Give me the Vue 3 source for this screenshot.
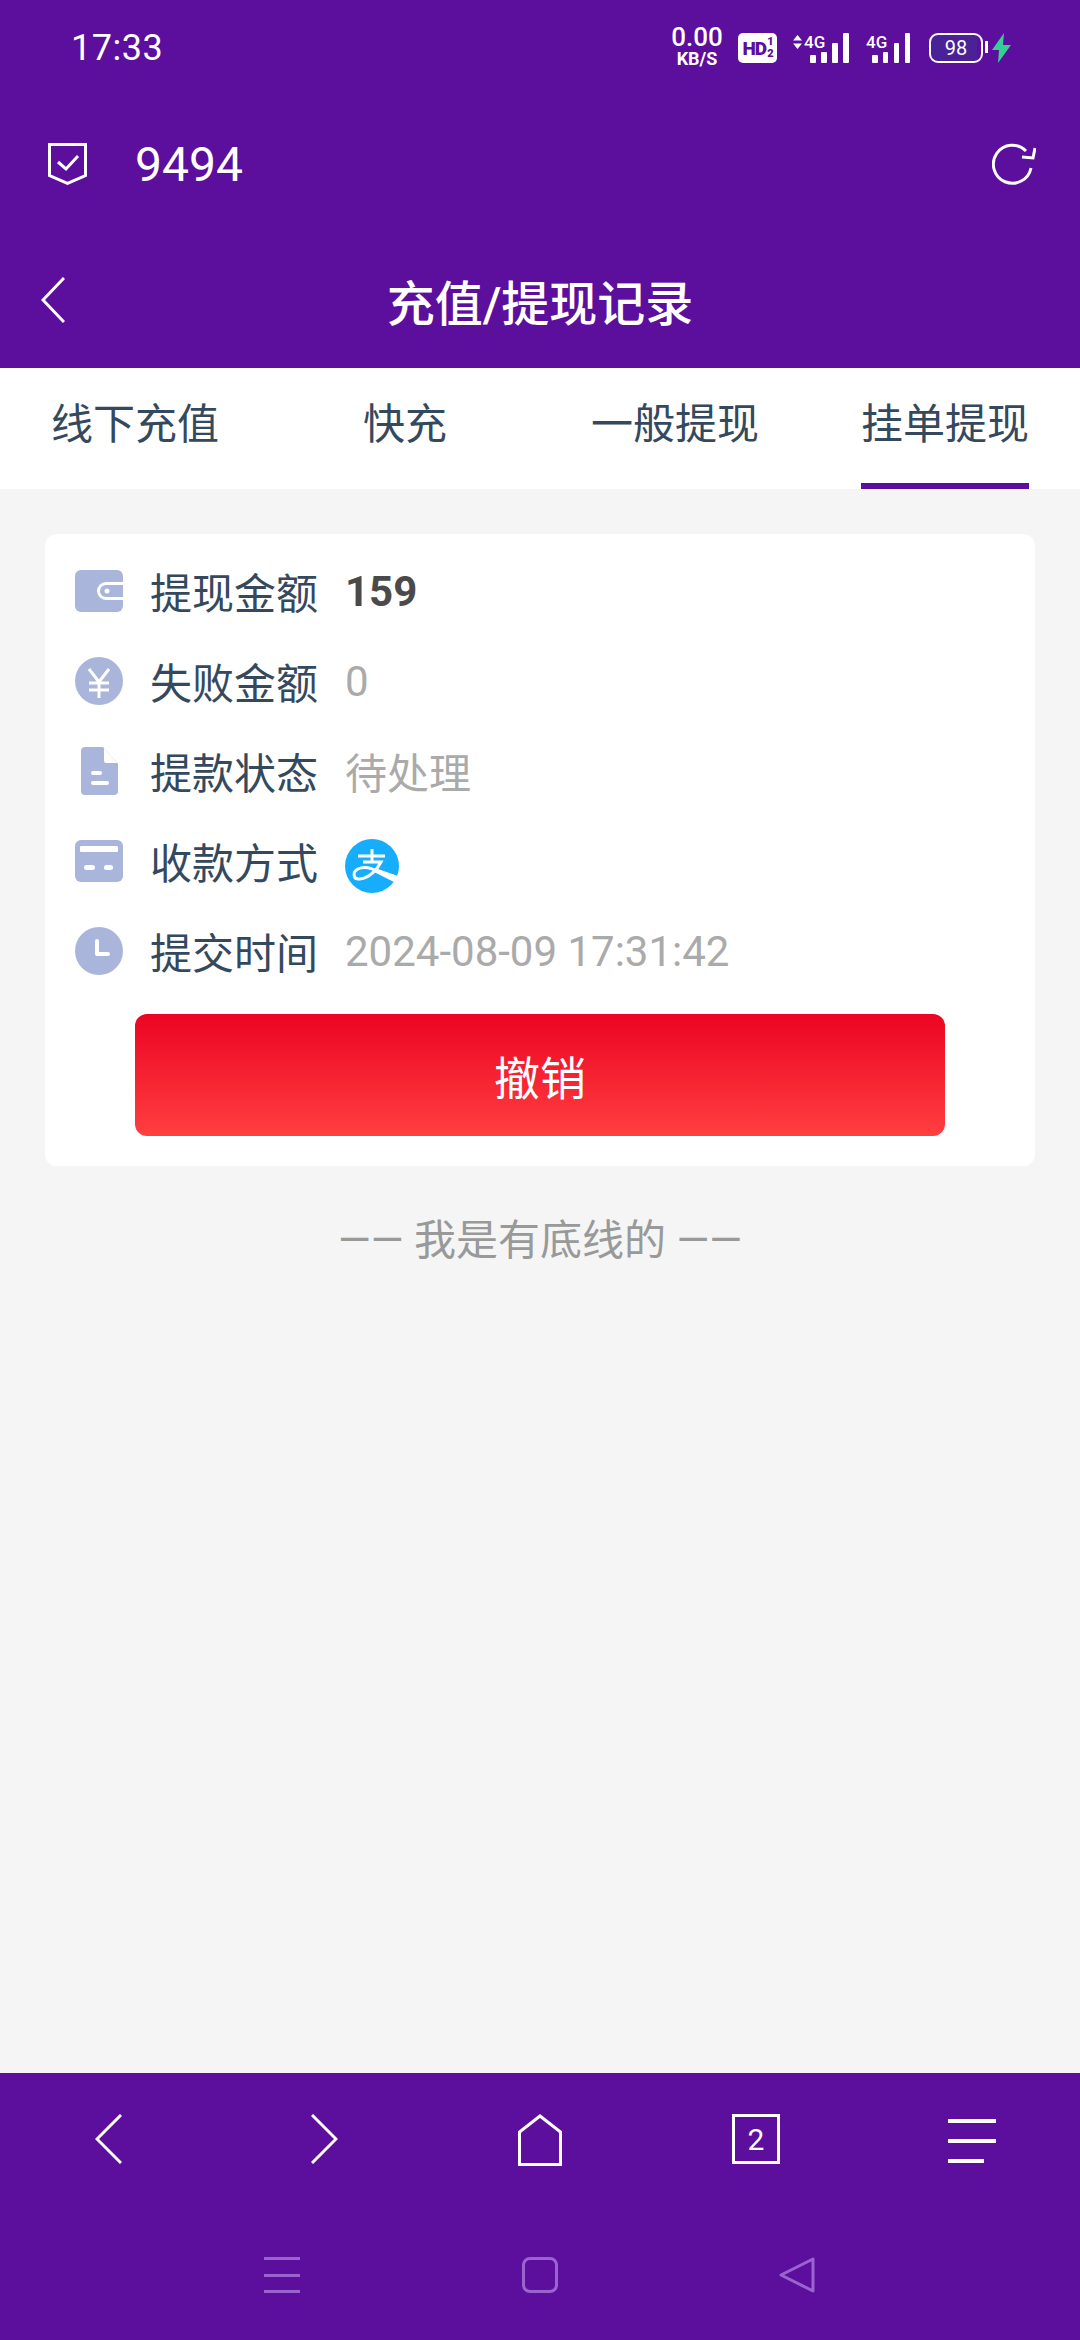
<template>
  <div class="page">
    <header class="head">
      <div class="status">
        <span class="clock">17:33</span>
        <div class="status-icons">
          <div class="speed"><b>0.00</b><i>KB/S</i></div>
          <div class="hd">HD<span class="frac">1<br>2</span></div>
          <div class="net net-first">
            <svg width="9" height="14" viewBox="0 0 9 14"><path d="M4.500 0L9 5.500H0zM4.500 14L0 8.500h9z" fill="#fff"/></svg>
            <span class="net-label">4G</span>
            <svg class="bars" width="39" height="30" viewBox="0 0 39 30"><g fill="#fff"><rect x="0" y="22" width="6" height="8" rx="1"/><rect x="11" y="19" width="6" height="11" rx="1"/><rect x="22" y="10" width="6" height="20" rx="1"/><rect x="33" y="0" width="6" height="30" rx="1"/></g></svg>
          </div>
          <div class="net">
            <span class="net-label">4G</span>
            <svg class="bars short-bars" width="38" height="30" viewBox="0 0 38 30"><g fill="#fff"><rect x="0" y="22" width="6" height="8" rx="1"/><rect x="11" y="19" width="5" height="11" rx="1"/><rect x="22" y="10" width="5" height="20" rx="1"/><rect x="33" y="0" width="5" height="30" rx="1"/></g></svg>
          </div>
          <div class="battery"><span>98</span></div>
          <svg class="bolt" width="19" height="30" viewBox="0 0 19 30"><path d="M12 0L0 17h7l-1 13L19 12h-8z" fill="#35cf93"/></svg>
        </div>
      </div>

      <div class="site-row">
        <svg width="39" height="42" viewBox="0 0 39 42" fill="none" stroke="#fff" stroke-width="3">
          <path d="M1.500 1.500h36v31L19.500 40.400 1.500 32.500z"/>
          <path d="M10 19l8 7 12-13"/>
        </svg>
        <span class="site-name">9494</span>
        <svg class="refresh" width="44" height="42" viewBox="0 0 44 42" fill="none" stroke="#fff" stroke-width="3">
          <path d="M34 8A19 19 0 1 0 39 25"/>
          <path d="M30 14l11 1 2-10"/>
        </svg>
      </div>

      <div class="title-row">
        <svg class="back" width="24" height="46" viewBox="0 0 24 46" fill="none" stroke="#fff" stroke-width="3"><path d="M23 1L2 23l21 22"/></svg>
        <h1>充值/提现记录</h1>
      </div>
    </header>

    <nav class="tabs">
      <div v-for="(tab, i) in tabs" :key="tab" class="tab" :class="{ active: i === 3 }">
        <span>{{ tab }}</span>
      </div>
    </nav>

    <main class="content">
      <section class="card">
        <div class="row">
          <svg class="ico" width="48" height="42" viewBox="0 0 48 42">
            <rect width="48" height="42" rx="6" fill="#a9b5da"/>
            <path d="M48 12H31a9 9 0 0 0 0 18h17z" fill="#fff"/>
            <path d="M48 15H31a6 6 0 0 0 0 12h17z" fill="#a9b5da"/>
            <circle cx="32" cy="21" r="2.500" fill="#fff"/>
          </svg>
          <span class="label">提现金额</span>
          <span class="value strong">159</span>
        </div>
        <div class="row">
          <svg class="ico" width="48" height="48" viewBox="0 0 48 48">
            <circle cx="24" cy="24" r="24" fill="#a9b5da"/>
            <path d="M14 12l10 13 10-13M14 26h20M14 33h20M24 25v16" fill="none" stroke="#fff" stroke-width="3"/>
          </svg>
          <span class="label">失败金额</span>
          <span class="value">0</span>
        </div>
        <div class="row">
          <svg class="ico" width="48" height="48" viewBox="0 0 48 48">
            <path d="M10 0h18l15 17v27a4 4 0 0 1-4 4H10a4 4 0 0 1-4-4V4a4 4 0 0 1 4-4z" fill="#a9b5da"/>
            <path d="M29 1l13 15H31a2 2 0 0 1-2-2z" fill="#fff"/>
            <rect x="16" y="24" width="11" height="4" rx="2" fill="#fff"/>
            <rect x="16" y="34" width="18" height="4" rx="2" fill="#fff"/>
          </svg>
          <span class="label">提款状态</span>
          <span class="value cjk">待处理</span>
        </div>
        <div class="row">
          <svg class="ico" width="48" height="42" viewBox="0 0 48 42">
            <rect width="48" height="42" rx="6" fill="#a9b5da"/>
            <rect x="5" y="6" width="38" height="6" rx="1" fill="#fff"/>
            <rect x="9" y="25" width="11" height="5" rx="2.500" fill="#fff"/>
            <rect x="29" y="25" width="9" height="5" rx="2.500" fill="#fff"/>
          </svg>
          <span class="label">收款方式</span>
          <svg class="alipay" width="54" height="54" viewBox="0 0 54 54">
            <circle cx="27" cy="27" r="27" fill="#16aefc"/>
            <path d="M13 17h27M27 10v12M18 23h18C32 31 24 39 15 40 8 41 7 33 13 30c6-3 14-1 23 4" fill="none" stroke="#fff" stroke-width="3"/>
            <path d="M30 29l23 8-2 7-22-11z" fill="#fff"/>
          </svg>
        </div>
        <div class="row">
          <svg class="ico" width="48" height="48" viewBox="0 0 48 48">
            <circle cx="24" cy="24" r="24" fill="#a9b5da"/>
            <path d="M22 14v13h11" fill="none" stroke="#fff" stroke-width="4" stroke-linecap="round" stroke-linejoin="round"/>
          </svg>
          <span class="label">提交时间</span>
          <span class="value">2024-08-09 17:31:42</span>
        </div>
        <button class="cancel" type="button">撤销</button>
      </section>
      <p class="end">—— 我是有底线的 ——</p>
    </main>

    <footer class="foot">
      <div class="browser-bar">
        <svg width="27" height="50" viewBox="0 0 27 50" fill="none" stroke="#fff" stroke-width="3"><path d="M26 1L2 25l24 24"/></svg>
        <svg width="27" height="50" viewBox="0 0 27 50" fill="none" stroke="#fff" stroke-width="3"><path d="M1 1l24 24L1 49"/></svg>
        <svg width="44" height="52" viewBox="0 0 44 52" fill="none" stroke="#fff" stroke-width="3"><path d="M1.500 50.500V18L22 2l20.500 16v32.500z"/></svg>
        <div class="tab-count">2</div>
        <div class="menu"><i></i><i></i><i class="short"></i></div>
      </div>
      <div class="system-bar">
        <div class="sys-menu"><i></i><i></i><i></i></div>
        <div class="sys-home"></div>
        <svg width="36" height="36" viewBox="0 0 36 36" fill="none" stroke="#9b63d0" stroke-width="3" stroke-linejoin="round"><path d="M34 2v32L2 18z"/></svg>
      </div>
    </footer>
  </div>
</template>

<script setup>
const tabs = ['线下充值', '快充', '一般提现', '挂单提现']
</script>

<style>
html, body {
  margin: 0;
  background: #f5f5f5;
}
</style>

<style scoped>
.page {
  width: 1080px;
  height: 2340px;
  display: flex;
  flex-direction: column;
  background: #f5f5f5;
  font-family: Roboto, "Noto Sans CJK SC", sans-serif;
  overflow: hidden;
}
.head {
  background: #5c0e9c;
  color: #fff;
  height: 368px;
  flex: none;
}
.status {
  height: 96px;
  display: flex;
  align-items: center;
  justify-content: space-between;
  padding: 0 69px 0 71px;
}
.clock {
  font-size: 36px;
  letter-spacing: 0.5px;
}
.status-icons {
  display: flex;
  align-items: center;
}
.speed {
  width: 52px;
  display: flex;
  flex-direction: column;
  align-items: center;
}
.speed b {
  font-size: 26px;
  font-weight: 500;
  line-height: 21px;
}
.speed i {
  font-size: 18px;
  font-style: normal;
  font-weight: 700;
  line-height: 21px;
}
.hd {
  margin-left: 15px;
  width: 39px;
  height: 30px;
  background: #fff;
  border-radius: 5px;
  color: #5c0e9c;
  font-size: 19px;
  font-weight: 900;
  display: flex;
  align-items: center;
  justify-content: center;
  letter-spacing: -1px;
}
.frac {
  font-size: 11px;
  line-height: 12px;
  margin-left: 1px;
}
.net {
  margin-left: 17px;
  position: relative;
  display: flex;
  align-items: flex-start;
  height: 30px;
  width: 44px;
}
.net-first {
  margin-left: 16px;
  width: 56px;
}
.net-first svg:first-child {
  margin: 2px 2px 0 0;
}
.net-label {
  font-size: 17px;
  line-height: 18px;
  font-weight: 500;
  white-space: nowrap;
}
.bars {
  position: absolute;
  right: 0;
  top: 0;
}
.battery {
  margin-left: 19px;
  width: 54px;
  height: 30px;
  border: 2.5px solid #fff;
  border-radius: 9px;
  box-sizing: border-box;
  display: flex;
  align-items: center;
  justify-content: center;
  background: linear-gradient(90deg, #4a2196 93%, transparent 93%);
  font-size: 20px;
  position: relative;
}
.battery::after {
  content: "";
  position: absolute;
  right: -7px;
  top: 6px;
  width: 3.500px;
  height: 12px;
  background: #fff;
}
.bolt {
  margin-left: 9px;
}
.site-row {
  height: 68px;
  margin-top: 34px;
  padding: 0 45px 0 48px;
  display: flex;
  align-items: center;
}
.site-name {
  margin-left: 48px;
  font-size: 48px;
}
.refresh {
  margin-left: auto;
  margin-right: -1px;
}
.title-row {
  margin-top: 56px;
  height: 92px;
  position: relative;
  display: flex;
  align-items: center;
  justify-content: center;
}
.back {
  position: absolute;
  left: 41px;
  top: 23px;
}
h1 {
  margin: 0;
  font-size: 48px;
  font-weight: 500;
}
.tabs {
  flex: none;
  height: 121px;
  background: #fff;
  display: grid;
  grid-template-columns: repeat(4, 1fr);
}
.tab {
  display: flex;
  justify-content: center;
  font-size: 42px;
  color: #34495e;
}
.tab span {
  height: 121px;
  line-height: 114px;
  box-sizing: border-box;
}
.tab.active span {
  border-bottom: 6px solid #5c0e9c;
}
.content {
  flex: 1;
  padding: 45px 45px 0;
}
.card {
  background: #fff;
  border-radius: 12px;
  padding: 12px 30px 30px;
}
.row {
  height: 90px;
  display: flex;
  align-items: center;
}
.ico {
  flex: none;
  margin-right: 28px;
}
.label {
  width: 194px;
  font-size: 42px;
  color: #34495e;
  margin: 0 1px 2px -1px;
}
.value {
  font-size: 42px;
  color: #aaa;
}
.value.cjk {
  margin-bottom: 2px;
}
.value.strong {
  color: #4a4a4a;
  font-weight: 700;
}
.alipay {
  display: block;
  margin-top: 10px;
}
.cancel {
  display: block;
  width: 810px;
  height: 122px;
  margin: 18px 0 0 60px;
  border: 0;
  border-radius: 12px;
  background: linear-gradient(180deg, #ec0422, #ff3f40);
  color: #fff;
  font-family: inherit;
  font-size: 46px;
}
.end {
  margin: 40px 0 0;
  text-align: center;
  font-size: 42px;
  color: #999;
}
.foot {
  flex: none;
  height: 267px;
  background: #5c0e9c;
}
.browser-bar {
  height: 120px;
  padding-top: 41px;
  box-sizing: border-box;
  display: grid;
  grid-template-columns: repeat(5, 216px);
  justify-items: center;
  align-items: start;
}
.tab-count {
  width: 48px;
  height: 50px;
  border: 3px solid #fff;
  box-sizing: border-box;
  color: #fff;
  font-size: 30px;
  display: flex;
  align-items: center;
  justify-content: center;
}
.menu {
  width: 48px;
  height: 44px;
  margin-top: 5px;
  display: flex;
  flex-direction: column;
  justify-content: space-between;
}
.menu i {
  display: block;
  height: 4px;
  background: #fff;
}
.menu i.short {
  width: 36px;
}
.system-bar {
  height: 147px;
  padding: 64px 265px 0 264px;
  box-sizing: border-box;
  display: flex;
  justify-content: space-between;
  align-items: flex-start;
}
.sys-menu {
  width: 36px;
  height: 36px;
  display: flex;
  flex-direction: column;
  justify-content: space-between;
}
.sys-menu i {
  display: block;
  height: 3px;
  background: #9b63d0;
}
.sys-home {
  width: 36px;
  height: 36px;
  border: 3px solid #9b63d0;
  border-radius: 8px;
  box-sizing: border-box;
}
</style>
